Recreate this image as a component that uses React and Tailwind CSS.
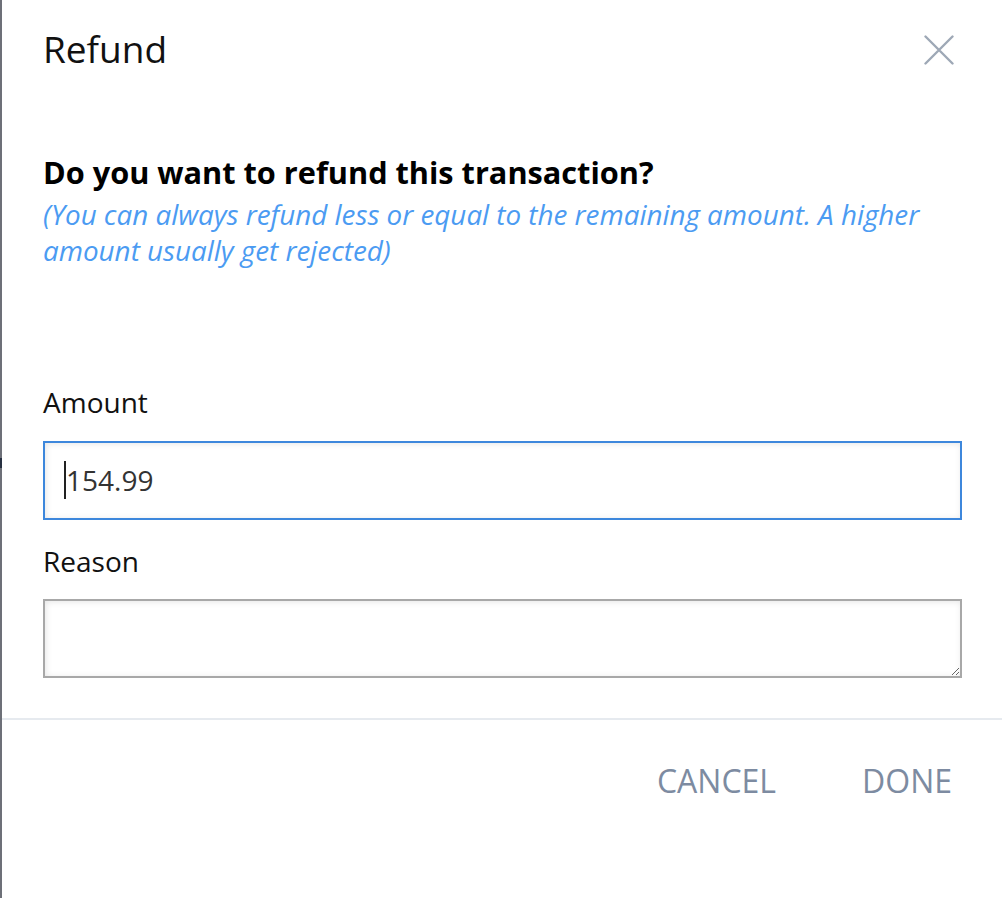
import React from "react";

export default function App() {
  return (
    <div
      className="flex h-[898px] w-full overflow-hidden bg-white"
      style={{ fontFamily: '"Open Sans", "Noto Sans", sans-serif' }}
    >
      <div className="flex w-[2px] shrink-0 flex-col bg-[#6d7078]">
        <div className="h-[458px]" />
        <div className="h-[10px] bg-[#273041]" />
      </div>

      <div className="flex flex-1 flex-col">
        <div className="flex items-start justify-between pl-[41px] pr-[48px] pt-[30px]">
          <h1 className="text-[37px] leading-none font-normal text-[#111111]">Refund</h1>
          <button className="mt-[5px] h-[30px] w-[30px]" aria-label="Close">
            <svg viewBox="0 0 30 30" width="30" height="30">
              <path
                d="M1.5 1.5 L28.5 28.5 M28.5 1.5 L1.5 28.5"
                stroke="#9ea8b6"
                strokeWidth="2.4"
                strokeLinecap="round"
                fill="none"
              />
            </svg>
          </button>
        </div>

        <div className="flex flex-col pl-[41px] pr-[40px]">
          <h2 className="mt-[90px] text-[30.7px] leading-none font-bold text-black">
            Do you want to refund this transaction?
          </h2>
          <p className="mt-[8px] text-[27.8px] leading-[36px] italic text-[#4b9bf2]">
            (You can always refund less or equal to the remaining amount. A higher amount usually get rejected)
          </p>

          <label className="mt-[120px] text-[28px] leading-none text-[#111111]">Amount</label>
          <div className="mt-[25px] flex h-[79px] items-center border-2 border-[#3d87dc] bg-white pl-[19px] shadow-[inset_1px_1px_6px_rgba(0,0,0,0.10)]">
            <span className="h-[38px] w-[2px] bg-[#222222]" />
            <span className="text-[28px] leading-none text-[#333333]">154.99</span>
          </div>

          <label className="mt-[27px] text-[28px] leading-none text-[#111111]">Reason</label>
          <textarea
            className="mt-[24px] block h-[79px] w-full resize border-2 border-[#a8a8a8] bg-white shadow-[inset_1px_1px_6px_rgba(0,0,0,0.10)] outline-none"
            defaultValue=""
          />
        </div>

        <div className="mt-[40px] h-[2px] w-full bg-[#e6eaef]" />

        <div className="mt-[45px] flex justify-end gap-[86px] pr-[50px]">
          <button className="text-[32px] leading-none text-[#7d8ba1]">CANCEL</button>
          <button className="text-[32px] leading-none text-[#7d8ba1]">DONE</button>
        </div>
      </div>
    </div>
  );
}
